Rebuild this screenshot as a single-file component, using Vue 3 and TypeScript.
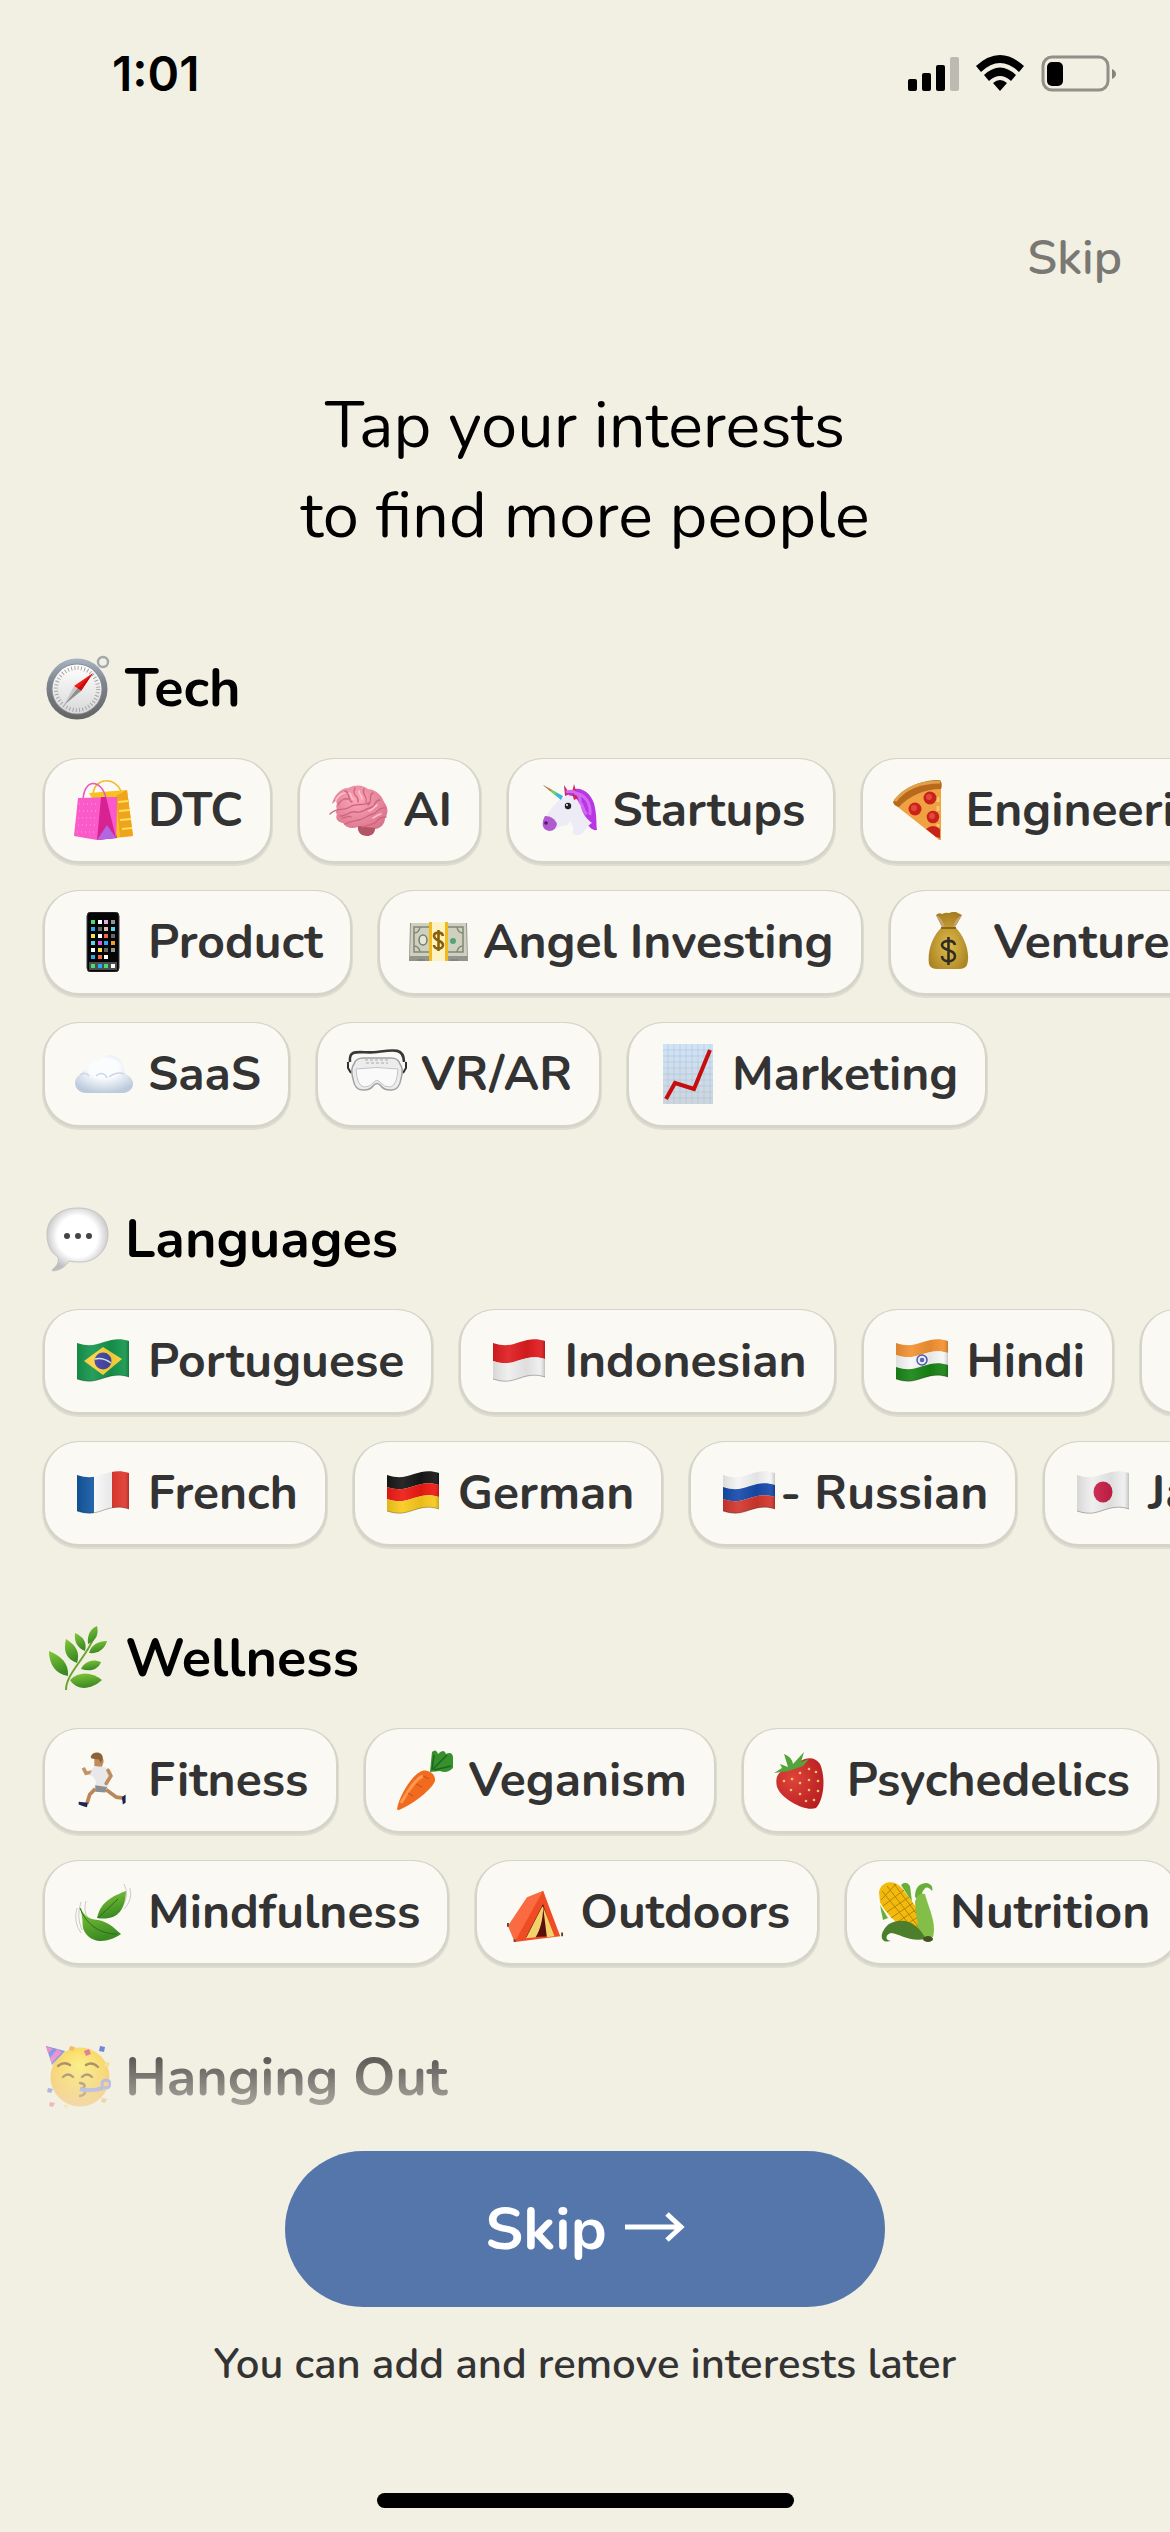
<script setup lang="ts">
import { ref } from 'vue'

interface Interest {
  icon: string
  label: string
  tight?: boolean
}

interface Section {
  icon: string
  title: string
  rows: Interest[][]
}

/* A horizontal band of a waving flag, between two heights of the cloth. */
const band = (t: number, b: number, fill: string): string =>
  `<path fill="${fill}" d="M4 ${t + 12}C16 ${t + 16} 22 ${t + 14} 31 ${t + 11}S47 ${t + 7} 56 ${t + 10}V${b + 10}C47 ${b + 7} 40 ${b + 8} 31 ${b + 11}S16 ${b + 16} 4 ${b + 12}Z"/>`

const flag = (inner: string): string =>
  inner +
  band(0, 36, 'url(#cloth)') +
  '<path fill="none" stroke="#000" stroke-opacity=".28" stroke-width="1" d="M4 48C16 52 22 50 31 47S47 43 56 46"/>'

const icons: Record<string, string> = {
  compass: `<circle cx="58" cy="7" r="5" fill="none" stroke="#a3a7aa" stroke-width="2.4"/>
    <circle cx="32" cy="34" r="30.500" fill="url(#steel)"/><circle cx="32" cy="34" r="25.500" fill="#8b8d90"/>
    <circle cx="32" cy="34" r="24.500" fill="url(#dial)"/>
    <circle cx="32" cy="34" r="21" fill="none" stroke="#a5a5a5" stroke-width="4" stroke-dasharray="1 2.300"/>
    <path d="M48 18 29 31l7 5z" fill="#f01b16"/><path d="M48 18 32.500 33.500l3.500 2.500z" fill="#c40f0d"/>
    <path d="M19 50 29 31l7 5z" fill="#c9c9c9"/><path d="M19 50l13.500-16.500L36 36z" fill="#8f8f8f"/>`,
  speech: `<path d="M33 2C51 2 63 12 63 28S51 56 36 56c-4 0-8 0-12-1-3 5-8 9-16 10-1 0-1-1 0-2 5-4 6-8 5-12C5 46 2 38 2 28 2 12 15 2 33 2z" fill="url(#bubble)" stroke="#c4c4c4"/>
    <g fill="#444"><circle cx="22" cy="30" r="3"/><circle cx="33" cy="30" r="3"/><circle cx="44" cy="30" r="3"/></g>`,
  herb: `<path d="M21 65C21 48 41 34 50 10" fill="none" stroke="#6aa52e" stroke-width="2"/>
    <g fill="url(#leaf)" transform="translate(1 0)"><path d="M22 51C10 49 3 40 3 26c12 5 20 12 19 25z"/><path d="M31 38C20 34 17 26 20 14c11 7 14 14 11 24z"/>
    <path d="M39 26c-8-3-11-10-10-18 9 4 12 10 10 18z"/><path d="M42 19c-1-9 2-15 9-18 2 8-1 15-9 18z"/>
    <path d="M43 28c2-8 9-12 18-12-2 8-9 13-18 12z"/><path d="M35 44c3-7 11-11 20-7-3 8-11 10-20 7z"/><path d="M24 55c9-9 22-8 32 0-11 10-25 11-32 0z"/></g>`,
  party: `<circle cx="35" cy="33" r="29.500" fill="url(#face)"/>
    <path d="M1 2 7 21 20 7z" fill="#4a6fe0"/><path d="M1 2l2 7 5-4zM5 14l1.500 5L17 8l-5-3z" fill="#ee5fcb"/>
    <g fill="none" stroke="#7b4a12" stroke-width="2.400" stroke-linecap="round"><path d="M13 22q6-5 12-1M41 21q6-4 12 2"/><path d="M18 33q5-5 10 0M37 33q5-5 10 0"/><path d="M35 39c8 1 4 6 0 6 5 0 8 5 0 7"/></g>
    <path d="M35 45c10 3 17 1 23-1" stroke="#7183d8" stroke-width="4" fill="none"/><circle cx="61" cy="40" r="4" fill="none" stroke="#7a83e0" stroke-width="3"/>
    <g transform="translate(0 -1)"><path d="M55 3l5 1-1 5-5-1z" fill="#315bd2"/><path d="M39 8l5-2 2 5-5 2z" fill="#df446b"/><path d="M25 3l5 1-2 4-4-1z" fill="#f0a13c"/><path d="M60 19l5 1-2 4-4-1z" fill="#f9d64c"/>
    <path d="M3 45l5 1-2 4-4-1z" fill="#4b67cf"/><path d="M5 59l5 1-2 4-4-1z" fill="#e0436b"/><path d="M57 55l5 1-2 4-4-1z" fill="#ef9a3c"/><path d="M18 62l5 0-2 4z" fill="#f2d940"/></g>`,
  bags: `<path d="M20 14C22-3 42-3 48 11" fill="none" stroke="#f3b722" stroke-width="1.500"/>
    <path d="M16 13 54 10l6 46-17 2z" fill="#f6c21f"/><path d="M43 16l11-6 6 46-13 1z" fill="#f0a31c"/><g stroke="#ffe15a" stroke-width="2"><path d="M45 22l10-1M46 31l11-1M47 40l11-1M49 49l10-1"/></g>
    <path d="M10 22C10-2 28-2 33 18" fill="none" stroke="#ee56bd" stroke-width="1.600"/>
    <path d="M5 18l39-1-1 41-19 2L1 56z" fill="#fb5bc9"/><path d="M28 17h6l10 41-20 2z" fill="#d62391"/><path d="M33 17h11l-1 41z" fill="#fb58cd"/><path d="M24 60l10-15 9 13z" fill="#b266df"/>
    <g stroke="#ff9be2" stroke-width="1" stroke-dasharray="1 3"><path d="M6 24h20M6 31h20M5 38h19M5 45h18M4 52h17"/></g>`,
  brain: `<path d="M4 24C6 15 13 8 20 8c8-4 15-3 20 1 9 1 14 7 16 13 5 6 4 12 1 16 0 7-6 11-10 11-1 5-5 7-9 6-6-1-8-4-8-8-6 2-12 1-15-4-6-1-8-5-6-9-2-1-1-3 0-4-1-3-1-5 0-6-1-1-1-3 0-4z" fill="url(#pink)"/>
    <path d="M30 46c-1 6 3 10 9 10 4 0 8-2 8-8z" fill="#b25566"/>
    <g fill="none" stroke="#cf6580" stroke-width="1.400" stroke-linecap="round"><path d="M2 34c8-8 13-2 20-7s14 0 20-5M10 25c2-5 7-7 10-6M17 11c6 2 2 9 7 11M27 8c-4 8 5 8 3 14M36 9c-3 6 4 6 2 13M45 13c-6 3 1 7-5 12M52 20c-6 0-4 7-10 8s-8 6-14 4-10 5-16 4M57 28c-7-1-7 5-12 6s-9 5-14 6-9 1-14 4M58 37c-5 0-8 2-10 5s-9 2-13 5M14 38c4 0 6-3 9-1"/></g>
    <g fill="none" stroke="#ffc1cb" stroke-width="1.600" stroke-linecap="round"><path d="M8 20c2-4 6-7 9-7M21 13c3 1 2 5 4 6M31 11c0 4 3 4 3 8M49 25c-3 2-4 5-8 6M53 34c-4 1-6 3-8 4"/></g>`,
  unicorn: `<path d="M31 13C40 3 56 12 58 28c2 10 1 16 2 22-4 1-8-3-10-6L34 20z" fill="#b737e2"/>
    <path d="M30 16C20 19 15 28 9 36c-5 7-3 13 3 15 6 1 8-4 13-5 5 0 7-2 8-5 2 4 5 8 2 12 4 4 11 2 12-2 3-3 4-6 8-8-6-4-11-12-11-18-5-8-9-11-15-9z" fill="#edebf5"/>
    <path d="M8 36c-4 7-3 14 4 15 5 0 7-3 8-7-2-5-6-8-12-8z" fill="#b05ad0"/><circle cx="9" cy="43" r="1.800" fill="#4e176d"/>
    <path d="M28 16l-1-11 6 9zM35 13l2-9 4 14-4 2z" fill="#c92765"/><path d="M24 20 6 5l20 11z" fill="#39b7d9"/><path d="M18 15 6 5l14 8z" fill="#7bd148"/><path d="M13 11 6 5l9 5z" fill="#e76a4c"/>
    <path d="M29 12c8-3 15 3 14 10 4 4 2 9 7 12M37 13c12 1 17 11 16 22" stroke="#d566f4" stroke-width="3" fill="none"/><circle cx="31" cy="26" r="3.200" fill="#272020"/><circle cx="30" cy="25" r="1" fill="#fff"/>`,
  pizza: `<g transform="translate(2 0)"><path d="M1 24 48 4v56q-2 1-4-2z" fill="#f0a243"/><path d="M0 22C9 8 27 0 47 0q3 4 1 9C32 9 16 16 6 27q-5-1-6-5z" fill="#b8691c"/><path d="M2 21C12 8 28 2 47 2" stroke="#e1a04a" stroke-width="3" fill="none"/>
    <path d="M45 17v30" stroke="#f9c66b" stroke-width="3" stroke-dasharray="5 4"/>
    <g fill="#c7231a"><circle cx="37" cy="18" r="6.500"/><circle cx="22" cy="29" r="6.500"/><circle cx="40" cy="37" r="6.300"/><path d="M33 49q7-6 14 0v9l-4-1z"/></g>
    <g fill="#e5483a"><circle cx="36" cy="17" r="3"/><circle cx="21" cy="28" r="3"/><circle cx="39" cy="36" r="3"/></g></g>`,
  phone: `<rect x="14" y="0" width="32" height="60" rx="4" fill="#050505" stroke="#3d3d42"/><rect x="16" y="50" width="28" height="8" fill="#4d4d50"/>
    <g><path fill="#45dd70" d="M18 8h4v4h-4zM18 52h4v4h-4zM31 52h4v4h-4z"/><path fill="#fff" d="M25 8h4v4h-4zM25 22h4v4h-4zM18 36h4v4h-4zM31 43h4v4h-4zM38 52h4v4h-4z"/><path fill="#e9a9e9" d="M31 8h4v4h-4z"/><path fill="#949494" d="M38 8h4v4h-4zM38 36h4v4h-4z"/>
    <path fill="#27a9f5" d="M18 15h4v4h-4zM31 29h4v4h-4zM18 43h4v4h-4zM25 52h4v4h-4z"/><path fill="#666" d="M25 15h4v4h-4zM38 22h4v4h-4zM31 36h4v4h-4z"/><path fill="#e3c1a7" d="M31 15h4v4h-4z"/><path fill="#59d5ef" d="M38 15h4v4h-4zM18 29h4v4h-4z"/>
    <path fill="#f5e050" d="M18 22h4v4h-4zM25 36h4v4h-4z"/><path fill="#f26546" d="M31 22h4v4h-4zM25 43h4v4h-4z"/><path fill="#df51ea" d="M25 29h4v4h-4z"/><path fill="#f59b1f" d="M38 29h4v4h-4z"/></g>`,
  cash: `<g transform="translate(1 1)"><path d="M1 10h57l1 38H0z" fill="#93958c"/><path d="M2 10h55l1 33H1z" fill="#cfd0bd"/><path d="M5 14h49v25H5z" fill="none" stroke="#83877a" stroke-width="1.500"/>
    <path d="M5 20q5 0 6-6M54 20q-5 0-6-6M5 33q5 0 6 6M54 33q-5 0-6 6" fill="none" stroke="#83877a" stroke-width="1.500"/>
    <ellipse cx="14" cy="27" rx="4" ry="5" fill="#e6e7d7" stroke="#777b70" stroke-width="1.500"/><circle cx="44" cy="28" r="3" fill="#54a378"/><path d="M8 47h44" stroke="#777" stroke-dasharray="8 3"/>
    <path d="M20 9h19v39H20z" fill="#fdf2c2"/><path d="M20 9h3v39h-3zM36 9h3v39h-3z" fill="#f4b91a"/>
    <path d="M34 23c-1-5-9-4-9 0 0 5 9 4 9 9s-9 5-9 0M29.500 17v21" fill="none" stroke="#89600a" stroke-width="2.600"/></g>`,
  moneybag: `<path d="M17 3q3-3 6-1 4-2 7-1 5-2 7-1l6 3-7 12c9 8 16 26 12 38q-2 4-8 4H19q-8 0-9-5C8 39 14 23 23 15z" fill="url(#sack)"/><path d="M17 3q5 1 9 12h8q2-9 9-12l-7 12H23z" fill="#c5a16e"/><path d="M22 16h15" stroke="#8b6810" stroke-width="2"/>
    <path d="M36 33c-1-6-13-5-13 0 0 6 13 4 13 11s-13 7-13 0M29.500 25v28" fill="none" stroke="#312d24" stroke-width="2.600"/>`,
  cloud: `<g transform="translate(2 0)"><path d="M11 49C-2 48-3 34 6 30c2-3 3-4 5-4 0-8 7-12 13-9 5-10 24-7 25 8 1 3 1 4 3 6 9 4 8 17-4 18z" fill="url(#mist)"/><path d="M21 32c4-4 9-3 11 2M5 31c3-3 7-2 9 1M34 33q8-6 15-3" fill="none" stroke="#cbd7e6" stroke-width="1.500"/></g>`,
  goggles: `<g transform="translate(1 -1)"><path d="M3 19C1 4 15 11 30 9S57 4 57 19" fill="none" stroke="#39393b" stroke-width="2.600"/><path d="M1 19v6l3 5M59 19v6l-3 5" fill="none" stroke="#303032" stroke-width="2"/>
    <path d="M7 21q2-6 9-6h28q7 0 9 6 4 5 1 15-2 12-11 11-6 0-9-4-4-5-8 0-3 4-9 4-9 1-11-11-3-10 1-15z" fill="#ececec" stroke="#a0a1a4" stroke-width="1.500"/><path d="M9 26q21-3 42 0-1 17-8 18-6 0-9-4-4-5-8 0-3 4-9 4-7-1-8-18z" fill="#fafafa" stroke="#c2c3c5"/><path d="M18 17h24M19 20h22" stroke="#aaa" stroke-dasharray="3 2"/></g>`,
  chart: `<path d="M6 0h50v60H6z" fill="url(#graph)"/><g stroke="#a9bfd3" stroke-width=".5"><path d="M6 6h50M6 12h50M6 18h50M6 24h50M6 30h50M6 36h50M6 42h50M6 48h50M6 54h50M11 0v60M17 0v60M23 0v60M29 0v60M35 0v60M41 0v60M47 0v60M53 0v60"/></g><path d="M9 55 18 39l19 6L53 6" fill="none" stroke="#c60e0e" stroke-width="4"/>`,
  brazil: flag(band(0, 36, '#15964d') + '<path d="M11 30 30 16l19 12-19 16z" fill="#fbd43a"/><circle cx="30" cy="30" r="8.500" fill="#4343a5"/><path d="M22 28q8-2 16 4" stroke="#d4eee5" stroke-width="1.500" fill="none"/>'),
  indonesia: flag(band(0, 18, '#df1d20') + band(18, 36, '#eee')),
  india: flag(band(0, 12, '#f39232') + band(12, 24, '#f7f7f7') + band(24, 36, '#198515') + '<circle cx="30" cy="29" r="5" fill="none" stroke="#4858b0" stroke-width="1.500"/><circle cx="30" cy="29" r="2.300" fill="#5968ba"/>'),
  spain: flag(band(0, 9, '#c71d2b') + band(9, 27, '#f9c928') + band(27, 36, '#c71d2b')),
  france: flag('<g clip-path="url(#wave)"><path fill="#1357a2" d="M4 6h17v46H4z"/><path fill="#fafafa" d="M21 6h18v46H21z"/><path fill="#e0392f" d="M39 6h17v46H39z"/></g>'),
  germany: flag(band(0, 12, '#171717') + band(12, 24, '#ee1a13') + band(24, 36, '#f9ca1b')),
  russia: flag(band(0, 12, '#f4f4f4') + band(12, 24, '#164aab') + band(24, 36, '#d2372d')),
  japan: flag(band(0, 36, '#eee') + '<ellipse cx="30" cy="29" rx="9.500" ry="10.500" fill="#c92048"/>'),
  runner: `<g transform="translate(2 3) scale(.92)"><path d="M21 5c4-5 11-1 10 5l-2 6-8-2z" fill="#c08b5c"/><path d="M17 4c2-7 15-6 13 3l-2 4-2-4-8-1z" fill="#8d6236"/><path d="M23 20 12 22 9 16" fill="none" stroke="#c69365" stroke-width="4"/>
    <path d="M20 15c8-1 18 1 20 5l-4 17-14-2c2-5-1-9-6-11z" fill="#e8e8ea"/><path d="M36 19l3 6-5 8" fill="none" stroke="#c18d5d" stroke-width="4" stroke-linecap="round"/><path d="M22 35l13 2-2 6-11-1z" fill="#8b8e92"/>
    <path d="M22 39 16 45l-3 10M34 40l11 8 8 1" fill="none" stroke="#bb875a" stroke-width="4"/><path d="M4 53l10 1-1 5-4-1-5-2zM51 48l4-3v9l-3 2z" fill="#1a2553"/></g>`,
  carrot: `<path d="M36 22 38 2q4-4 6 2 6-6 8 0 6-3 7 3v11q-6 6-13 3z" fill="#36912d"/><path d="M39 19 53 5M38 20l2-15M40 20l17-4" stroke="#1d671c" stroke-width="1.500"/><path d="M3 59C6 44 18 26 26 22c5-4 16 0 15 9C38 39 20 54 5 60q-2 0-2-1z" fill="#f16a1e"/><path d="M7 53C16 38 22 29 29 26" stroke="#ff9a50" stroke-width="3" fill="none"/><path d="M29 26l6 3M22 34l6 3M14 43l5 3" stroke="#c94910" stroke-width="1"/>`,
  strawberry: `<path d="M20 19C27 8 42 4 48 14c6 13 4 36-4 44-10 4-34-8-39-21C2 24 9 19 20 19z" fill="url(#berry)"/><path d="M17 21 2 23l8-5-2-4 8 3L12 4q8 3 9 10L32 2l-3 10 8-3-6 7z" fill="#51a53a"/>
    <g fill="#f5c56a"><circle cx="12" cy="31" r="1.300"/><circle cx="20" cy="29" r="1.300"/><circle cx="28" cy="23" r="1.300"/><circle cx="37" cy="19" r="1.300"/><circle cx="44" cy="22" r="1.300"/><circle cx="28" cy="33" r="1.300"/><circle cx="37" cy="30" r="1.300"/><circle cx="46" cy="31" r="1.300"/><circle cx="19" cy="40" r="1.300"/><circle cx="28" cy="44" r="1.300"/><circle cx="37" cy="40" r="1.300"/><circle cx="46" cy="41" r="1.300"/><circle cx="34" cy="51" r="1.300"/><circle cx="42" cy="50" r="1.300"/></g>`,
  leaves: `<g fill="none" stroke="#c9cdc5" stroke-width="1"><path d="M4 26q-4 14 4 25M8 20q-5 14 1 28M13 19q-3 10 2 17M51 2q6 11-2 23M57 6q3 12-6 21"/></g><path d="M7 25C12 45 7 44 14 53c9 10 24 6 34-1C39 44 35 40 25 38 14 37 11 33 7 25z" fill="url(#leaf)"/><path d="M7 26c6 16 19 26 37 26" fill="none" stroke="#286e1b"/>
    <path d="M24 36c3-13 10-20 29-27-1 20-9 30-29 27z" fill="url(#leaf)"/><path d="M25 36 45 17" fill="none" stroke="#286e1b"/>`,
  tent: `<g transform="translate(2 3) scale(.95)"><path d="M1 43 21 13 38 6l10 31-40 23z" fill="#fb6b42"/><path d="M38 6 8 60l48-6z" fill="#ef4b25"/><path d="M38 20 20 55l28-1z" fill="#5d0f0e"/><path d="M37 23 20 56l10-1c5-7 8-19 8-32zM38 23l4 32 8-1z" fill="#f2d26c"/><path d="M1 40v4M8 57v4M58 50v4" stroke="#62452c" stroke-width="2"/></g>`,
  corn: `<g transform="translate(3 0)"><path d="M23 3q5-5 9 1l2 16zM2 23l8 13-5 2zM37 15q0-14 12-14 7 2 5 8-6-8-10 2l4 13z" fill="#68ae39"/><path d="M1 10C3-1 16-3 24 6l14 19c10 13 11 28 3 31C29 53 6 30 2 20z" fill="#f1bb0d"/>
    <g stroke="#c08100" stroke-width="1"><path d="M3 18 18 2M5 24 26 8M9 30 31 15M13 36l22-15M18 41l21-14M23 46l20-13M30 51l14-10M4 9l35 43M9 4l34 44M16 2l28 37"/></g>
    <path d="M37 20c1 16 5 30 4 36l14-1c4-15-5-30-8-43q-8-2-10 8z" fill="#83bf48"/><path d="M11 42c16-8 29 0 37 15-18 3-25-5-35-6-5 1-7 7 0 8-14 3-10-11-2-17z" fill="#4c7e2b"/><ellipse cx="50" cy="57" rx="5" ry="3" fill="#435422"/></g>`,
}

const sections: Section[] = [
  {
    icon: 'compass',
    title: 'Tech',
    rows: [
      [
        { icon: 'bags', label: 'DTC' },
        { icon: 'brain', label: 'AI' },
        { icon: 'unicorn', label: 'Startups' },
        { icon: 'pizza', label: 'Engineering' },
      ],
      [
        { icon: 'phone', label: 'Product' },
        { icon: 'cash', label: 'Angel Investing' },
        { icon: 'moneybag', label: 'Venture Capital' },
      ],
      [
        { icon: 'cloud', label: 'SaaS' },
        { icon: 'goggles', label: 'VR/AR' },
        { icon: 'chart', label: 'Marketing' },
      ],
    ],
  },
  {
    icon: 'speech',
    title: 'Languages',
    rows: [
      [
        { icon: 'brazil', label: 'Portuguese' },
        { icon: 'indonesia', label: 'Indonesian' },
        { icon: 'india', label: 'Hindi' },
        { icon: 'spain', label: 'Spanish' },
      ],
      [
        { icon: 'france', label: 'French' },
        { icon: 'germany', label: 'German' },
        { icon: 'russia', label: '- Russian', tight: true },
        { icon: 'japan', label: 'Japanese' },
      ],
    ],
  },
  {
    icon: 'herb',
    title: 'Wellness',
    rows: [
      [
        { icon: 'runner', label: 'Fitness' },
        { icon: 'carrot', label: 'Veganism' },
        { icon: 'strawberry', label: 'Psychedelics' },
      ],
      [
        { icon: 'leaves', label: 'Mindfulness' },
        { icon: 'tent', label: 'Outdoors' },
        { icon: 'corn', label: 'Nutrition' },
      ],
    ],
  },
  { icon: 'party', title: 'Hanging Out', rows: [] },
]

const selected = ref<string[]>([])

function toggle(label: string): void {
  selected.value = selected.value.includes(label)
    ? selected.value.filter((l) => l !== label)
    : [...selected.value, label]
}
</script>

<template>
  <div class="screen">
    <svg class="defs" width="0" height="0" aria-hidden="true">
      <defs>
        <linearGradient id="steel" x1="0" y1="0" x2="0" y2="1"><stop offset="0" stop-color="#a9b4c2" /><stop offset=".4" stop-color="#7d8590" /><stop offset="1" stop-color="#636363" /></linearGradient>
        <linearGradient id="dial" x1="0" y1="0" x2="0" y2="1"><stop offset="0" stop-color="#fff" /><stop offset="1" stop-color="#d9d9d9" /></linearGradient>
        <radialGradient id="bubble" cx=".5" cy=".45" r=".55"><stop offset=".6" stop-color="#fff" /><stop offset="1" stop-color="#bdbdbd" /></radialGradient>
        <linearGradient id="leaf" x1="0" y1="0" x2=".3" y2="1"><stop offset="0" stop-color="#82c938" /><stop offset="1" stop-color="#3c8a24" /></linearGradient>
        <radialGradient id="face" cx=".5" cy=".3" r=".75"><stop offset="0" stop-color="#fff04a" /><stop offset=".6" stop-color="#fcc21f" /><stop offset="1" stop-color="#f09a1a" /></radialGradient>
        <radialGradient id="pink" cx=".45" cy=".3" r=".7"><stop offset="0" stop-color="#fba6b6" /><stop offset="1" stop-color="#d7708a" /></radialGradient>
        <radialGradient id="sack" cx=".5" cy=".6" r=".6"><stop offset="0" stop-color="#dfbc4c" /><stop offset="1" stop-color="#a67e1f" /></radialGradient>
        <radialGradient id="mist" cx=".5" cy=".35" r=".65"><stop offset=".4" stop-color="#fbfcfe" /><stop offset="1" stop-color="#bccbdc" /></radialGradient>
        <linearGradient id="graph" x1="0" y1="0" x2="0" y2="1"><stop offset="0" stop-color="#cfe3f8" /><stop offset="1" stop-color="#cdd5dd" /></linearGradient>
        <radialGradient id="berry" cx=".35" cy=".4" r=".7"><stop offset="0" stop-color="#e0433c" /><stop offset="1" stop-color="#b91f22" /></radialGradient>
        <linearGradient id="cloth"><stop offset="0" stop-color="#000" stop-opacity=".1" /><stop offset=".3" stop-color="#fff" stop-opacity=".08" /><stop offset=".65" stop-color="#000" stop-opacity=".07" /><stop offset=".9" stop-color="#fff" stop-opacity=".06" /><stop offset="1" stop-color="#000" stop-opacity=".2" /></linearGradient>
        <clipPath id="wave"><path d="M4 12C16 16 22 14 31 11S47 7 56 10V46C47 43 40 44 31 47S16 52 4 48Z" /></clipPath>
      </defs>
    </svg>

    <header class="status">
      <time class="clock">1:01</time>
      <svg class="indicators" width="210" height="40" viewBox="0 0 210 40" aria-hidden="true">
        <rect x="2" y="25" width="9" height="12" rx="2" />
        <rect x="16" y="19" width="9" height="18" rx="2" />
        <rect x="30" y="11" width="9" height="26" rx="2" />
        <rect x="44" y="3" width="9" height="34" rx="2" opacity=".22" />
        <path d="M70 12Q94-10 118 12l-5 6Q94 0 75 18z" />
        <path d="M78 21q16-15 32 0l-5 6q-11-10-22 0z" />
        <path d="M87 29q7-6 14 0l-7 8z" />
        <rect x="137" y="3" width="65" height="33" rx="9" fill="none" stroke="#000" stroke-opacity=".4" stroke-width="3" />
        <rect x="141" y="8" width="16" height="24" rx="5" />
        <path d="M206 15q4 2 4 5t-4 5z" opacity=".45" />
      </svg>
    </header>

    <nav class="top">
      <button type="button" class="skip-link">Skip</button>
    </nav>

    <h1 class="heading">Tap your interests<br />to find more people</h1>

    <main class="interests">
      <section v-for="section in sections" :key="section.title" class="group">
        <h2 class="group-title">
          <svg class="title-icon" viewBox="0 0 66 66" aria-hidden="true" v-html="icons[section.icon]"></svg>
          <span>{{ section.title }}</span>
        </h2>
        <div v-if="section.rows.length" class="rows">
          <div v-for="(row, i) in section.rows" :key="i" class="row">
            <button
              v-for="item in row"
              :key="item.label"
              type="button"
              class="chip"
              :class="{ tight: item.tight }"
              :aria-pressed="selected.includes(item.label)"
              @click="toggle(item.label)"
            >
              <svg class="chip-icon" viewBox="-1 0 62 60" aria-hidden="true" v-html="icons[item.icon]"></svg>
              <span>{{ item.label }}</span>
            </button>
          </div>
        </div>
      </section>
      <div class="fade"></div>
    </main>

    <footer class="footer">
      <button type="button" class="primary">
        <span>Skip</span>
        <svg width="60" height="42" viewBox="0 0 60 42" fill="none" stroke="#fff" stroke-width="5" aria-hidden="true">
          <path d="M0 19h56M42 6l14 13-14 13" />
        </svg>
      </button>
      <p class="note">You can add and remove interests later</p>
      <div class="home"></div>
    </footer>
  </div>
</template>

<style>
body {
  margin: 0;
  background: #f2efe3;
}
</style>

<style scoped>
.screen {
  display: flex;
  flex-direction: column;
  height: 100vh;
  overflow: hidden;
  background: #f2efe3;
  color: #000;
  font-family: Nunito, Lato, sans-serif;
}

.defs {
  position: absolute;
}

button {
  margin: 0;
  border: 0;
  font-family: inherit;
  cursor: pointer;
}

.status {
  display: flex;
  align-items: center;
  justify-content: space-between;
  flex: none;
  height: 148px;
  padding: 0 54px 0 112px;
}

.clock {
  font: 600 48px/60px Inter, sans-serif;
}

.top {
  display: flex;
  justify-content: flex-end;
  flex: none;
  padding: 74px 48px 0;
}

.skip-link {
  padding: 0;
  background: none;
  color: #797872;
  font-size: 48px;
  font-weight: 600;
  line-height: 72px;
}

.heading {
  flex: none;
  margin: 87px 0 0;
  font-size: 65px;
  font-weight: 400;
  line-height: 90px;
  text-align: center;
}

.interests {
  position: relative;
  flex: 1;
  min-height: 0;
  margin-top: 90px;
  overflow: hidden;
}

.group {
  margin-bottom: 77px;
}

.group-title {
  display: flex;
  align-items: center;
  gap: 14px;
  height: 74px;
  margin: 0 0 34px;
  padding: 0 45px;
  font-size: 54px;
  font-weight: 700;
}

.title-icon {
  flex: none;
  width: 66px;
  height: 66px;
}

.rows {
  display: flex;
  flex-direction: column;
  gap: 30px;
}

.row {
  display: flex;
  gap: 30px;
  padding: 0 45px;
}

.chip {
  display: flex;
  align-items: center;
  flex: none;
  gap: 14px;
  height: 102px;
  padding: 0 27px;
  border-radius: 34px;
  background: #fbf9f4;
  box-shadow: 0 1px 0 2px #d5d4c9, 0 2px 0 3px #dfddd2;
  color: #333;
  font-size: 48px;
  font-weight: 700;
  white-space: nowrap;
}

.chip.tight {
  gap: 0;
}

.chip-icon {
  flex: none;
  width: 62px;
  height: 60px;
}

.fade {
  position: absolute;
  right: 0;
  bottom: 0;
  left: 0;
  height: 150px;
  background: linear-gradient(rgba(242, 239, 227, 0), #f2efe3);
  pointer-events: none;
}

.footer {
  display: flex;
  flex-direction: column;
  align-items: center;
  flex: none;
}

.primary {
  display: flex;
  align-items: center;
  justify-content: center;
  gap: 18px;
  width: 600px;
  height: 156px;
  border-radius: 78px;
  background: #5576ab;
  color: #fff;
  font-size: 60px;
  font-weight: 700;
}

.note {
  margin: 28px 0 0;
  color: #333;
  font-size: 42px;
  font-weight: 600;
  line-height: 60px;
}

.home {
  width: 417px;
  height: 15px;
  margin: 98px 0 24px;
  border-radius: 8px;
  background: #000;
}
</style>
